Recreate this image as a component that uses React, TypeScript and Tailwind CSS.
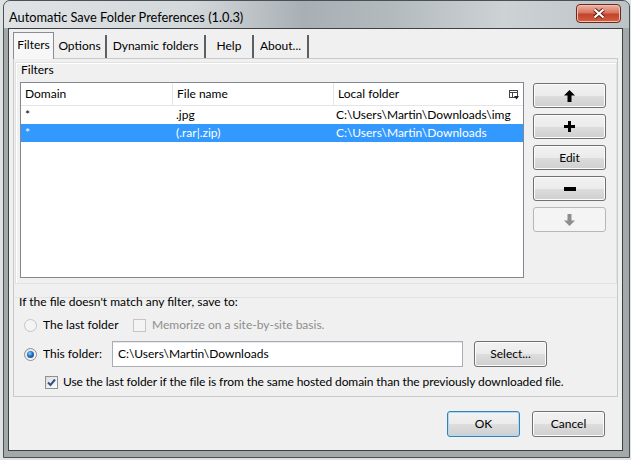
import React from "react";

function ArrowUp({ color = "#000" }: { color?: string }) {
  return (
    <svg width="11" height="12" viewBox="0 0 11 12">
      <path d="M5.5 0 L11 5.5 H7.5 V12 H3.5 V5.5 H0 Z" fill={color} />
    </svg>
  );
}

function ArrowDown({ color = "#000" }: { color?: string }) {
  return (
    <svg width="11" height="12" viewBox="0 0 11 12">
      <path d="M5.5 12 L11 6.5 H7.5 V0 H3.5 V6.5 H0 Z" fill={color} />
    </svg>
  );
}

function PlusIcon() {
  return (
    <svg width="11" height="11" viewBox="0 0 11 11">
      <path d="M4 0 H7 V4 H11 V7 H7 V11 H4 V7 H0 V4 H4 Z" fill="#000" />
    </svg>
  );
}

function MinusIcon() {
  return (
    <svg width="12" height="4" viewBox="0 0 12 4">
      <rect x="0" y="0" width="12" height="4" fill="#000" />
    </svg>
  );
}

function ColumnPicker() {
  return (
    <svg width="10" height="10" viewBox="0 0 10 10">
      <rect x="0.5" y="0.5" width="8" height="7" fill="none" stroke="#444" />
      <line x1="0.5" y1="2.5" x2="8.5" y2="2.5" stroke="#444" />
      <line x1="3.5" y1="2.5" x2="3.5" y2="7.5" stroke="#444" />
      <path d="M5 6 H10 L7.5 9.5 Z" fill="#222" />
    </svg>
  );
}

function WinButton({
  children,
  disabled,
  className,
}: {
  children: React.ReactNode;
  disabled?: boolean;
  className: string;
}) {
  return (
    <div
      className={
        "flex items-center justify-center rounded-[3px] border " +
        (disabled
          ? "border-[#b5b8ba] bg-[#f4f4f4] text-[#838383] "
          : "border-[#707070] bg-[linear-gradient(180deg,#f2f2f2_0%,#ebebeb_50%,#dddddd_51%,#cfcfcf_100%)] text-black shadow-[inset_0_0_0_1px_#fcfcfc] ") +
        className
      }
    >
      {children}
    </div>
  );
}

function Radio({ checked, disabled }: { checked?: boolean; disabled?: boolean }) {
  return (
    <div
      className={
        "flex h-[13px] w-[13px] items-center justify-center rounded-full border " +
        (disabled
          ? "border-[#c5c5c5] bg-[#f4f4f4]"
          : "border-[#8e8f8f] bg-[linear-gradient(135deg,#e0e0e0,#ffffff)]")
      }
    >
      {checked && (
        <div className="h-[7px] w-[7px] rounded-full bg-[radial-gradient(circle_at_40%_35%,#8fd3ff_0%,#1f6fbf_45%,#0e3f80_100%)]" />
      )}
    </div>
  );
}

function Check({ checked, disabled }: { checked?: boolean; disabled?: boolean }) {
  return (
    <div
      className={
        "flex h-[13px] w-[13px] items-center justify-center border " +
        (disabled
          ? "border-[#c5c5c5] bg-[#f4f4f4]"
          : "border-[#8e8f8f] bg-[linear-gradient(135deg,#dcdcdc,#ffffff)]")
      }
    >
      {checked && (
        <svg width="9" height="9" viewBox="0 0 9 9">
          <path d="M1 4.5 L3.5 7 L8 1.5" fill="none" stroke="#3a4f86" strokeWidth="2" />
        </svg>
      )}
    </div>
  );
}

export default function App() {
  const tabs = [
    { label: "Options", w: "w-[53px]" },
    { label: "Dynamic folders", w: "w-[99px]" },
    { label: "Help", w: "w-[48px]" },
    { label: "About...", w: "w-[55px]" },
  ];
  return (
    <div className="h-[460px] w-[631px] overflow-hidden bg-[#dfe2e3] pb-[2px] pl-[3px] pr-[1px] text-[12px] leading-[14px] text-black [font-family:Lato,'Liberation_Sans',sans-serif]">
      <div className="flex h-[458px] flex-col rounded-t-[7px] border border-[#4a5054] bg-[#a3a9a8] pb-[6px] pl-[4px] pr-[6px]">
        {/* title bar */}
        <div className="-ml-[4px] -mr-[6px] flex h-[27px] items-start rounded-t-[6px] bg-[linear-gradient(90deg,#dfe3e5_0%,#d3d8db_30%,#a9b0b5_48%,#b3babe_62%,#cdd2d5_80%,#bcc3c7_100%)]">
          <div className="ml-[5px] mt-[8px] text-[12.8px] leading-[16px] text-[#000]">
            Automatic Save Folder Preferences (1.0.3)
          </div>
          <div className="ml-auto mr-[8px] mt-[3px] flex h-[19px] w-[45px] items-center justify-center rounded-[4px] border border-[#6b2a1e] bg-[linear-gradient(180deg,#eeb3a5_0%,#d7765f_45%,#c4432a_55%,#d4603f_100%)] shadow-[inset_0_0_0_1px_#f2c0b2]">
            <svg width="12" height="11" viewBox="0 0 12 11">
              <path d="M1.5 1.5 L10.5 9.5 M10.5 1.5 L1.5 9.5" stroke="#5a1a10" strokeWidth="4" />
              <path d="M1.5 1.5 L10.5 9.5 M10.5 1.5 L1.5 9.5" stroke="#ffffff" strokeWidth="2.2" />
            </svg>
          </div>
        </div>
        {/* client */}
        <div className="flex h-[423px] flex-col border border-[#3b4145] bg-[#f0f0f0]">
          <div className="px-[4px] pt-[3px]">
            {/* tab row */}
            <div className="flex h-[26px] items-end">
              <div className="relative z-10 -mb-[1px] flex h-[27px] w-[41px] items-center justify-center border border-b-0 border-[#898c95] bg-[#f7f7f7] pb-[2px]">
                Filters
              </div>
              {tabs.map((t) => (
                <div
                  key={t.label}
                  className={
                    "flex h-[23px] items-center justify-center border-r-[2px] border-[#5d6063] bg-[#f0f0f0] pb-[2px] " +
                    t.w
                  }
                >
                  {t.label}
                </div>
              ))}
            </div>
            {/* panel */}
            <div className="flex h-[339px] flex-col border border-[#c9c9c9] bg-[#f0f0f0]">
              {/* group 1 */}
              <div className="ml-[1px] mt-[3px] flex h-[222px] flex-col border border-[#e2e2e2] shadow-[inset_1px_1px_0_#ffffff]">
                <div className="pl-[5px] leading-[14px]">Filters</div>
                <div className="mt-[5px] flex pl-[4px]">
                  <div className="flex h-[196px] w-[504px] flex-col border border-[#828790] bg-white">
                    <div className="flex h-[23px] border-b border-[#e5e5e5]">
                      <div className="flex w-[152px] items-center border-r border-[#e5e5e5] pl-[4px]">Domain</div>
                      <div className="flex w-[161px] items-center border-r border-[#e5e5e5] pl-[4px]">File name</div>
                      <div className="flex flex-1 items-center pl-[4px] pr-[4px]">
                        <span>Local folder</span>
                        <span className="ml-auto mt-[1px]">
                          <ColumnPicker />
                        </span>
                      </div>
                    </div>
                    <div className="flex h-[18px] items-center">
                      <div className="w-[152px] pl-[4px]">*</div>
                      <div className="w-[161px] pl-[3px]">.jpg</div>
                      <div className="flex-1 pl-[2px]">C:\Users\Martin\Downloads\img</div>
                    </div>
                    <div className="flex h-[18px] items-center bg-[#3399ff] text-white">
                      <div className="w-[152px] pl-[4px]">*</div>
                      <div className="w-[161px] pl-[3px]">(.rar|.zip)</div>
                      <div className="flex-1 pl-[2px]">C:\Users\Martin\Downloads</div>
                    </div>
                  </div>
                  <div className="ml-[9px] mt-[1px] flex flex-col gap-[6px]">
                    <WinButton className="h-[25px] w-[73px]">
                      <ArrowUp />
                    </WinButton>
                    <WinButton className="h-[25px] w-[73px]">
                      <PlusIcon />
                    </WinButton>
                    <WinButton className="h-[25px] w-[73px]">Edit</WinButton>
                    <WinButton className="h-[25px] w-[73px]">
                      <MinusIcon />
                    </WinButton>
                    <WinButton disabled className="h-[25px] w-[73px]">
                      <ArrowDown color="#8e8e8e" />
                    </WinButton>
                  </div>
                </div>
              </div>
              {/* group 2 */}
              <div className="ml-[1px] mt-[13px] flex flex-1 flex-col border-t border-[#e2e2e2]">
                <div className="-mt-[3px] pl-[4px] leading-[14px]">
                  If the file doesn't match any filter, save to:
                </div>
                <div className="mt-[6px] flex h-[20px] items-center pl-[9px]">
                  <Radio disabled />
                  <div className="ml-[6px] w-[90px]">The last folder</div>
                  <Check disabled />
                  <div className="ml-[6px] text-[#8d8d8d]">Memorize on a site-by-site basis.</div>
                </div>
                <div className="mt-[6px] flex h-[26px] items-center pl-[9px]">
                  <Radio checked />
                  <div className="ml-[6px] w-[69px]">This folder:</div>
                  <div className="flex h-[26px] w-[351px] items-center border border-[#abadb3] bg-white pl-[5px] shadow-[inset_0_1px_0_#e3e9ef]">
                    C:\Users\Martin\Downloads
                  </div>
                  <WinButton className="ml-[11px] h-[26px] w-[73px]">Select...</WinButton>
                </div>
                <div className="mt-[5px] flex h-[20px] items-center pl-[30px]">
                  <Check checked />
                  <div className="ml-[5px] tracking-[-0.1px]">
                    Use the last folder if the file is from the same hosted domain than the previously downloaded file.
                  </div>
                </div>
              </div>
            </div>
          </div>
          {/* footer */}
          <div className="flex justify-end gap-[12px] pr-[17px] pt-[14px]">
            <div className="flex h-[26px] w-[73px] items-center justify-center rounded-[3px] border border-[#3c7fb1] bg-[linear-gradient(180deg,#f2f2f2_0%,#ebebeb_50%,#dddddd_51%,#cfcfcf_100%)] shadow-[inset_0_0_0_1px_#a8dcf7]">
              OK
            </div>
            <WinButton className="h-[26px] w-[73px]">Cancel</WinButton>
          </div>
        </div>
      </div>
    </div>
  );
}
